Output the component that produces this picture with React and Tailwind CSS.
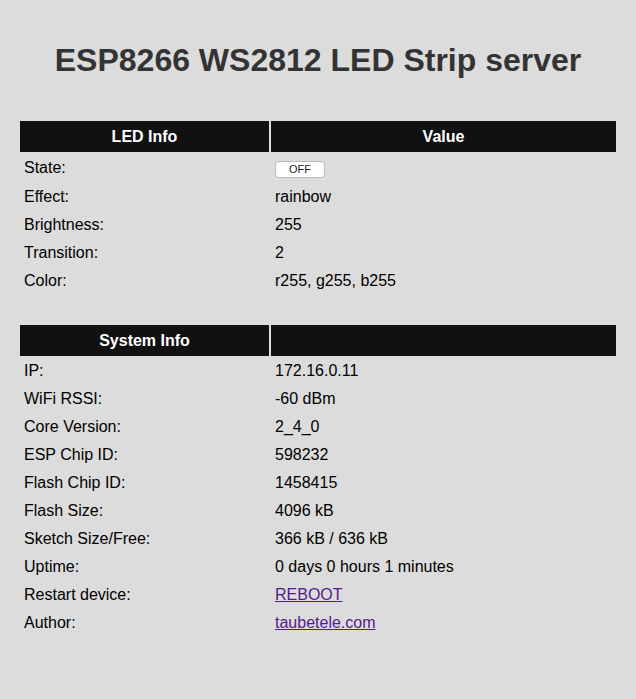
import React from "react";

const ledRows = [
    ["Effect:", "rainbow"],
    ["Brightness:", "255"],
    ["Transition:", "2"],
    ["Color:", "r255, g255, b255"],
];

const sysRows = [
    ["IP:", "172.16.0.11"],
    ["WiFi RSSI:", "-60 dBm"],
    ["Core Version:", "2_4_0"],
    ["ESP Chip ID:", "598232"],
    ["Flash Chip ID:", "1458415"],
    ["Flash Size:", "4096 kB"],
    ["Sketch Size/Free:", "366 kB / 636 kB"],
    ["Uptime:", "0 days 0 hours 1 minutes"],
];

function Row({ label, children, tall }) {
    const h = tall ? "h-[28px]" : "h-[26px]";
    return (
        <tr>
            <td className={`${h} px-1 py-0 align-middle`}>{label}</td>
            <td className={`${h} px-1 py-0 align-middle`}>{children}</td>
        </tr>
    );
}

function Head({ left, right }) {
    return (
        <tr>
            <th className="h-[31px] w-[249px] bg-[#111111] text-white font-bold text-center">{left}</th>
            <th className="h-[31px] bg-[#111111] text-white font-bold text-center">{right}</th>
        </tr>
    );
}

export default function App() {
    return (
        <div className="min-h-[699px] bg-[#dcdcdc] text-black text-[16px] pt-[40px] pb-10" style={{ fontFamily: '"Liberation Sans", Arial, sans-serif' }}>
            <h1 className="text-center text-[32px] font-bold text-[#333333] leading-[40px]">ESP8266 WS2812 LED Strip server</h1>

            <table className="mx-[18px] mt-[39px] w-[600px] border-separate border-spacing-[2px]">
                <thead>
                    <Head left="LED Info" right="Value" />
                </thead>
                <tbody>
                    <Row label="State:" tall>
                        <button className="h-[17px] w-[50px] rounded-[4px] bg-white border border-[#bbbbbb] text-[11px] leading-none text-[#222] mt-[1px]">OFF</button>
                    </Row>
                    {ledRows.map(([k, v]) => (
                        <Row key={k} label={k}>{v}</Row>
                    ))}
                </tbody>
            </table>

            <table className="mx-[18px] mt-[27px] w-[600px] border-separate border-spacing-[2px]">
                <thead>
                    <Head left="System Info" right="" />
                </thead>
                <tbody>
                    {sysRows.map(([k, v]) => (
                        <Row key={k} label={k}>{v}</Row>
                    ))}
                    <Row label="Restart device:">
                        <a href="#" className="text-[#551a8b] underline">REBOOT</a>
                    </Row>
                    <Row label="Author:">
                        <a href="#" className="text-[#551a8b] underline">taubetele.com</a>
                    </Row>
                </tbody>
            </table>
        </div>
    );
}
